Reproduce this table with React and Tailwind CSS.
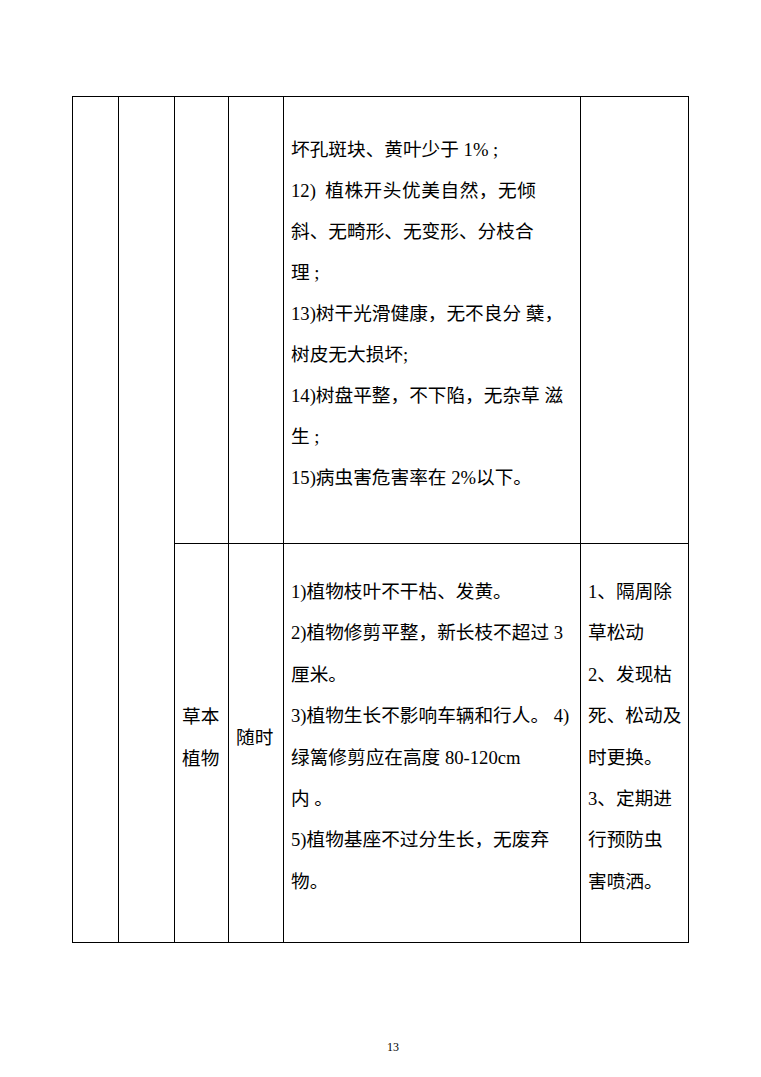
export default function App() {
  const row1 = [
    "坏孔斑块、黄叶少于 1% ;",
    null,
    "斜、无畸形、无变形、分枝合",
    "理 ;",
    "13)树干光滑健康，无不良分 蘖，",
    "树皮无大损坏;",
    "14)树盘平整，不下陷，无杂草 滋",
    "生 ;",
    "15)病虫害危害率在 2%以下。",
  ];
  const row2 = [
    "1)植物枝叶不干枯、发黄。",
    "2)植物修剪平整，新长枝不超过 3",
    "厘米。",
    "3)植物生长不影响车辆和行人。 4)",
    "绿篱修剪应在高度 80-120cm",
    "内 。",
    "5)植物基座不过分生长，无废弃",
    "物。",
  ];
  const right2 = [
    "1、隔周除",
    "草松动",
    "2、发现枯",
    "死、松动及",
    "时更换。",
    "3、定期进",
    "行预防虫",
    "害喷洒。",
  ];
  return (
    <div lang="zh-CN" className="w-[761px] h-[1077px] bg-white text-black font-['Liberation_Serif','Noto_Sans_CJK_SC',serif]">
      <div className="pt-[96px] pl-[72px]">
        <div className="flex w-[617px] border-l border-t border-black">
          <div className="w-[46px] border-r border-b border-black" />
          <div className="w-[56px] border-r border-b border-black" />
          <div className="flex flex-col">
            <div className="flex h-[447px]">
              <div className="w-[54px] border-r border-b border-black" />
              <div className="w-[55px] border-r border-b border-black" />
              <div className="w-[297px] border-r border-b border-black pl-[7px] pt-[32px] text-[18.67px] leading-[41px] whitespace-pre">
                {row1.map((t, i) =>
                  t === null ? (
                    <div key={i}>
                      {"12)  "}
                      <span className="tracking-[0.55px]">植株开头优美自然，无倾</span>
                    </div>
                  ) : (
                    <div key={i}>{t}</div>
                  )
                )}
              </div>
              <div className="w-[108px] border-r border-b border-black" />
            </div>
            <div className="flex h-[399px] text-[18.67px] leading-[41.4px]">
              <div className="w-[54px] border-r border-b border-black pl-[7px] pb-[11px] flex flex-col justify-center">
                <div>草本</div>
                <div>植物</div>
              </div>
              <div className="w-[55px] border-r border-b border-black pl-[7px] pb-[11px] flex flex-col justify-center">
                <div>随时</div>
              </div>
              <div className="w-[297px] border-r border-b border-black pl-[7px] pt-[27px] whitespace-pre">
                {row2.map((t, i) => (
                  <div key={i}>{t}</div>
                ))}
              </div>
              <div className="w-[108px] border-r border-b border-black pl-[7px] pt-[27px] whitespace-pre">
                {right2.map((t, i) => (
                  <div key={i}>{t}</div>
                ))}
              </div>
            </div>
          </div>
        </div>
      </div>
      <div className="pt-[97px] pl-[387px] text-[12px] leading-[14px]">13</div>
    </div>
  );
}
